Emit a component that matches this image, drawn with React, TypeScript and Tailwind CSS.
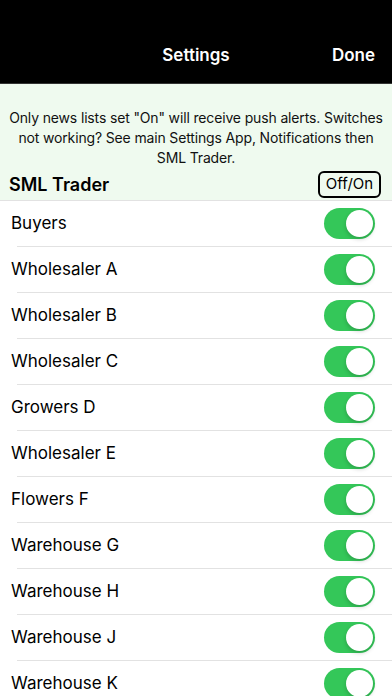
const lists = [
  "Buyers",
  "Wholesaler A",
  "Wholesaler B",
  "Wholesaler C",
  "Growers D",
  "Wholesaler E",
  "Flowers F",
  "Warehouse G",
  "Warehouse H",
  "Warehouse J",
  "Warehouse K",
];

function Toggle() {
  return (
    <div className="flex h-[31px] w-[51px] items-center justify-end rounded-full bg-[#34c759] p-[2px]">
      <div className="h-[27px] w-[27px] rounded-full bg-white shadow-[0_2px_4px_rgba(0,0,0,0.2)]" />
    </div>
  );
}

export default function App() {
  return (
    <div className="h-[696px] w-[392px] overflow-hidden bg-white font-['Inter',sans-serif] text-black">
      <div className="flex h-[84px] items-end border-b border-[#333] bg-black pb-[15px]">
        <div className="w-[100px]" />
        <div className="flex-1 text-center text-[17px] font-semibold text-white">Settings</div>
        <div className="w-[100px] pr-[17px] text-right text-[17px] font-semibold text-white">Done</div>
      </div>
      <div className="bg-[#effaef] pt-[24px]">
        <p className="px-[4px] text-center text-[14px] leading-[20px] tracking-[-0.15px] text-[#111]">
          Only news lists set "On" will receive push alerts. Switches not working? See main Settings App, Notifications then SML Trader.
        </p>
        <div className="flex h-[32px] items-center justify-between pl-[9px] pr-[11px]">
          <span className="text-[18px] font-semibold">SML Trader</span>
          <span className="flex h-[27px] w-[63px] items-center justify-center rounded-[6px] border-2 border-black text-[15px]">
            Off/On
          </span>
        </div>
      </div>
      <div className="border-t border-[#e2e2e2]">
        {lists.map((name) => (
          <div key={name}>
            <div className="flex h-[45px] items-center justify-between pl-[11px] pr-[17px]">
              <span className="text-[17px]">{name}</span>
              <Toggle />
            </div>
            <div className="ml-[17px] h-px bg-[#e2e2e2]" />
          </div>
        ))}
      </div>
    </div>
  );
}
